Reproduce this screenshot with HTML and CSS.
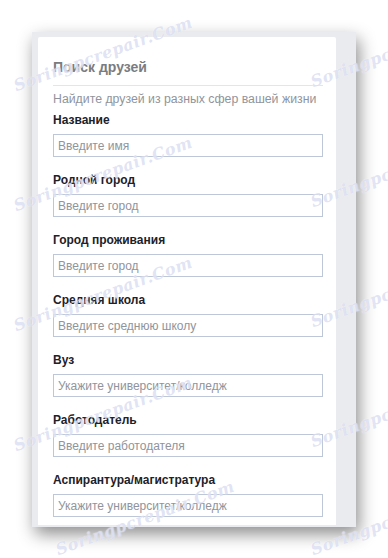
FILE: index.html
```html
<!DOCTYPE html>
<html lang="ru">
<head>
    <meta charset="UTF-8">
    <meta name="viewport" content="width=device-width, initial-scale=1.0">
    <title>Поиск друзей</title>
    <link rel="stylesheet" href="styles.css">
</head>
<body>
    <div class="page">
        <div class="frame">
            <div class="card">
                <h2 class="card-title">Поиск друзей</h2>
                <p class="card-sub">Найдите друзей из разных сфер вашей жизни</p>

                <div class="field">
                    <label for="name">Название</label>
                    <input type="text" id="name" placeholder="Введите имя">
                </div>
                <div class="field">
                    <label for="hometown">Родной город</label>
                    <input type="text" id="hometown" placeholder="Введите город">
                </div>
                <div class="field">
                    <label for="city">Город проживания</label>
                    <input type="text" id="city" placeholder="Введите город">
                </div>
                <div class="field">
                    <label for="school">Средняя школа</label>
                    <input type="text" id="school" placeholder="Введите среднюю школу">
                </div>
                <div class="field">
                    <label for="uni">Вуз</label>
                    <input type="text" id="uni" placeholder="Укажите университет/колледж">
                </div>
                <div class="field">
                    <label for="work">Работодатель</label>
                    <input type="text" id="work" placeholder="Введите работодателя">
                </div>
                <div class="field">
                    <label for="grad">Аспирантура/магистратура</label>
                    <input type="text" id="grad" placeholder="Укажите университет/колледж">
                </div>
            </div>
        </div>

        <!-- водяной знак поверх скриншота -->
        <div class="marks">
            <span class="mark" style="left: 18px; top: 76px;">Soringpcrepair.Com</span>
            <span class="mark" style="left: 18px; top: 196px;">Soringpcrepair.Com</span>
            <span class="mark" style="left: 18px; top: 316px;">Soringpcrepair.Com</span>
            <span class="mark" style="left: 18px; top: 436px;">Soringpcrepair.Com</span>
            <span class="mark" style="left: 60px; top: 540px;">Soringpcrepair.Com</span>
            <span class="mark" style="left: 315px; top: 72px;">Soringpcrepair.Com</span>
            <span class="mark" style="left: 315px; top: 192px;">Soringpcrepair.Com</span>
            <span class="mark" style="left: 315px; top: 312px;">Soringpcrepair.Com</span>
            <span class="mark" style="left: 315px; top: 432px;">Soringpcrepair.Com</span>
            <span class="mark" style="left: 315px; top: 540px;">Soringpcrepair.Com</span>
        </div>
    </div>
</body>
</html>
```

FILE: styles.css
```css
body {
    margin: 0;
    background-color: #fff;
    font-family: "Liberation Sans", Arial, sans-serif;
}
.page {
    position: relative;
    width: 388px;
    height: 558px;
    overflow: hidden;
    padding: 32px 0 0 32px;
    box-sizing: border-box;
}
.frame {
    width: 324px;
    height: 495px;
    box-sizing: border-box;
    padding: 5px 20px 0 6px;
    background-color: #e9ebee;
    box-shadow: 3px 7px 16px rgba(0, 0, 0, 0.45);
    overflow: hidden;
}
.card {
    height: 488px;
    background-color: #fff;
    border-radius: 2px 2px 0 0;
    padding: 21px 13px 0 15px;
    box-sizing: border-box;
}
.card-title {
    margin: 0;
    padding-bottom: 9px;
    border-bottom: 1px solid #e5e5e5;
    font-size: 14px;
    line-height: 18px;
    font-weight: bold;
    color: #7a7c80;
}
.card-sub {
    margin: 5px 0 5px;
    font-size: 12.3px;
    line-height: 16px;
    color: #90949c;
}
.field {
    margin-bottom: 15px;
}
.field label {
    display: block;
    margin-bottom: 6px;
    font-size: 12px;
    line-height: 16px;
    font-weight: bold;
    color: #1d2129;
}
.field input {
    display: block;
    width: 100%;
    height: 23px;
    box-sizing: border-box;
    margin: 0;
    padding: 0 4px;
    border: 1px solid #bdc7d8;
    border-radius: 0;
    font-family: inherit;
    font-size: 12px;
    color: #1d2129;
    outline: none;
}
.field input::placeholder {
    color: #90949c;
}
.marks {
    position: absolute;
    inset: 0;
    pointer-events: none;
}
.mark {
    position: absolute;
    white-space: nowrap;
    font-family: "DejaVu Serif", serif;
    font-style: italic;
    font-weight: bold;
    font-size: 16px;
    line-height: 20px;
    letter-spacing: 0.5px;
    color: rgba(176, 184, 226, 0.4);
    text-shadow: 0 0 1px rgba(255, 255, 255, 0.9);
    transform-origin: left bottom;
    transform: rotate(-20deg);
}
```
